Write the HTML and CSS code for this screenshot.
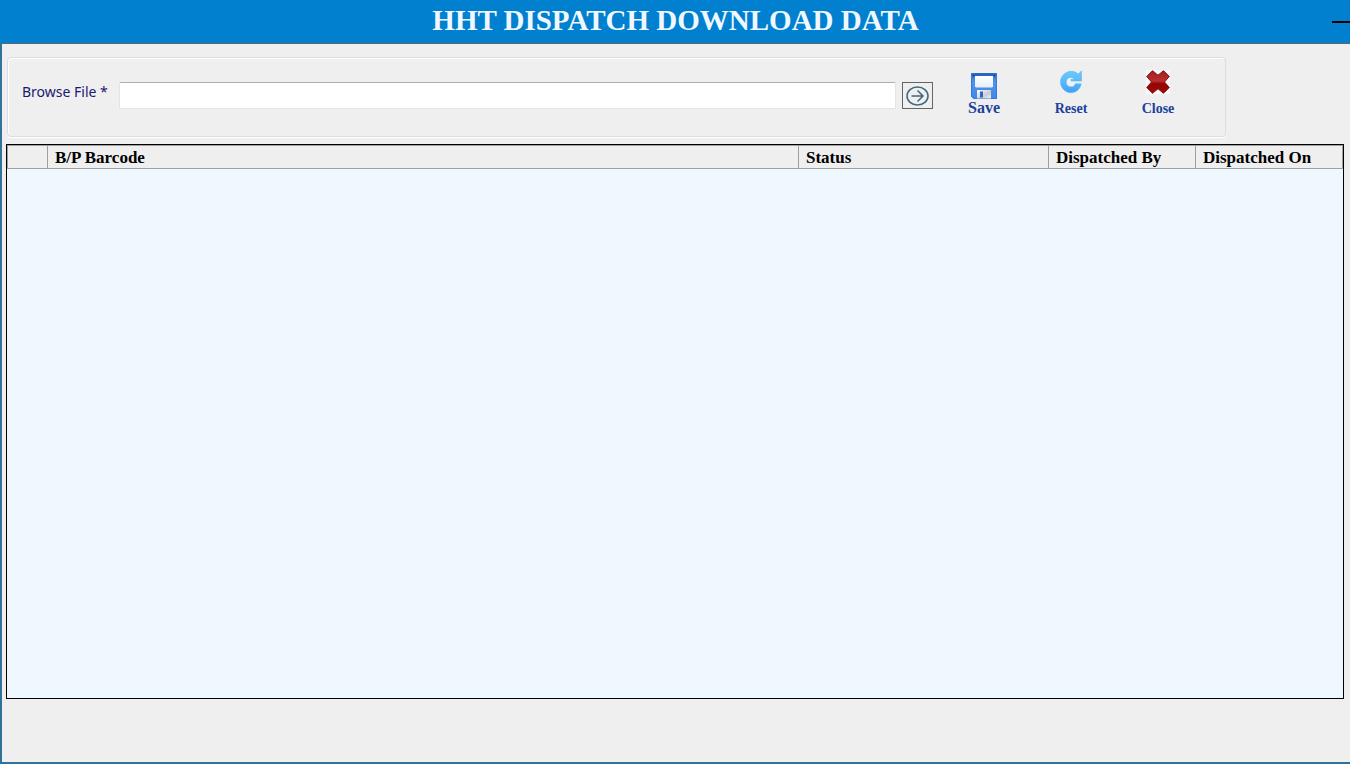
FILE: index.html
```html
<!DOCTYPE html>
<html lang="en">
<head>
<meta charset="utf-8">
<title>HHT Dispatch Download Data</title>
<link rel="stylesheet" href="styles.css">
</head>
<body>
<div class="window">
  <header class="titlebar">
    <span></span>
    <h1 class="title">HHT DISPATCH DOWNLOAD DATA</h1>
    <button class="minimize" type="button" aria-label="Minimize"></button>
  </header>
  <main class="content">
    <form class="toolbar">
      <label class="field-label" for="file">Browse File *</label>
      <input class="file-input" id="file" type="text">
      <button class="browse" type="button" aria-label="Browse">
        <svg width="23" height="20" viewBox="0 0 23 20" fill="none" stroke="#3f6780">
          <ellipse cx="11.5" cy="10" rx="10.5" ry="9" stroke-width="1.5"/>
          <path d="M5.5 10H17M11.5 4.5L17 10l-5.500 5.500" stroke-width="1.500"/>
        </svg>
      </button>
      <div class="actions">
        <button class="action action-save" type="button">
          <svg width="26" height="26" viewBox="0 0 26 26">
            <defs>
              <linearGradient id="disk" x1="0" y1="0" x2="0" y2="1"><stop offset="0" stop-color="#3674cf"/><stop offset=".35" stop-color="#4d92ee"/><stop offset="1" stop-color="#4288e6"/></linearGradient>
              <linearGradient id="paper" x1="0" y1="0" x2="0" y2="1"><stop offset="0" stop-color="#fff"/><stop offset="1" stop-color="#e4eff3"/></linearGradient>
              <linearGradient id="metal" x1="0" y1="0" x2="1" y2="1"><stop offset="0" stop-color="#fff"/><stop offset=".6" stop-color="#c9ccd2"/><stop offset="1" stop-color="#f3f3f3"/></linearGradient>
            </defs>
            <path d="M0 0h26v26H2.500L0 23.500z" fill="url(#disk)"/>
            <path d="M.5 0v23l2.500 2.500H25.500V0" fill="none" stroke="#3978d8"/>
            <path d="M4 0h18v3H4z" fill="#2b65bc"/>
            <path d="M1.500 1.500h2v2h-2zM22.500 1.500h2v2h-2z" fill="#193f87"/>
            <path d="M4 3h18v10.500l-1 1H5l-1-1z" fill="url(#paper)"/>
            <path d="M6 17h14v8.500H6z" fill="url(#metal)"/>
            <path d="M9 18.500h3v6H9z" fill="#2867cc"/>
          </svg>
          <span>Save</span>
        </button>
        <button class="action action-reset" type="button">
          <svg width="24" height="24" viewBox="0 0 24 24">
            <defs><linearGradient id="arrow" x1="0" y1="0" x2="0" y2="1"><stop offset="0" stop-color="#6cc9ff"/><stop offset=".5" stop-color="#55baff"/><stop offset="1" stop-color="#3da0f3"/></linearGradient></defs>
            <path d="M22.500 .8V11H12V9.200h3.300C14.500 8 13.300 7.400 12 7.400a4.700 4.700 0 1 0 4.400 6.400h5.800C21.300 19 17.300 22.700 12 22.700A10.700 10.700 0 1 1 19.300 4z" fill="url(#arrow)" stroke="#62b8ee" stroke-width=".6"/>
          </svg>
          <span>Reset</span>
        </button>
        <button class="action" type="button">
          <svg width="24" height="24" viewBox="0 0 24 24">
            <defs><linearGradient id="cross" x1="0" y1="0" x2="0" y2="1"><stop offset="0" stop-color="#a51c1c"/><stop offset=".45" stop-color="#b93030"/><stop offset=".58" stop-color="#940303"/><stop offset="1" stop-color="#a80808"/></linearGradient></defs>
            <path d="M0 0h24v24H0z" fill="#fafafa"/>
            <path d="M6.500 .7 12 5.200 17.500 .7 23.300 6.500 18.500 12l4.800 5.500-5.800 5.800L12 18.800 6.500 23.300 .7 17.500 5.500 12 .7 6.500z" fill="url(#cross)" stroke="#7f1414" stroke-linejoin="round"/>
          </svg>
          <span>Close</span>
        </button>
      </div>
    </form>
    <section class="grid">
      <table class="records">
        <thead>
          <tr>
            <th class="col-marker"></th>
            <th>B/P Barcode</th>
            <th class="col-status">Status</th>
            <th class="col-user">Dispatched By</th>
            <th class="col-user">Dispatched On</th>
          </tr>
        </thead>
        <tbody></tbody>
      </table>
    </section>
  </main>
</div>
</body>
</html>
```
FILE: styles.css
```css
* { box-sizing: border-box; }
body { margin: 0; }
.window {
  min-height: 100vh;
  display: flex;
  flex-direction: column;
  background: #0080cf;
  padding: 0 0 1px 1px;
}
.titlebar {
  display: grid;
  grid-template-columns: 1fr auto 1fr;
  height: 43px;
}
.title {
  margin: 0;
  color: #f0f8ff;
  font: bold 29px/40px "Liberation Serif", serif;
  white-space: nowrap;
}
.minimize {
  justify-self: end;
  width: 18px;
  height: 23px;
  padding: 0;
  background: none;
  border: 0;
  border-bottom: 2px solid #000;
}
.content {
  flex: 1;
  display: flex;
  flex-direction: column;
  gap: 7px;
  padding: 13px 6px 63px 4px;
  background: #efefef;
  border: solid #646464;
  border-width: 1px 0 1px 1px;
}
.toolbar {
  display: flex;
  align-items: flex-start;
  height: 80px;
  margin: 0 118px 0 1px;
  padding: 11px 50px 0 14px;
  border: 1px solid #d5dfe5;
  border-radius: 4px;
  box-shadow: inset 1px 1px #fff, 0 1px #fff;
}
.field-label {
  width: 97px;
  margin-top: 13px;
  color: #191970;
  font: 14px/20px "Noto Sans", sans-serif;
  white-space: nowrap;
}
.file-input {
  flex: 1;
  min-width: 0;
  height: 27px;
  margin-top: 13px;
  padding: 0 4px;
  background: #fff;
  border: 1px solid #e2e3ea;
  border-top-color: #abadb3;
  border-radius: 2px;
  font: 14px "Noto Sans", sans-serif;
}
.browse {
  display: grid;
  place-items: center;
  width: 31px;
  height: 27px;
  margin: 13px 34px 0 6px;
  padding: 0;
  background: #efefef;
  border: 1px solid #646464;
}
.actions {
  display: flex;
  gap: 53px;
}
.action {
  display: flex;
  flex-direction: column;
  align-items: center;
  gap: 6px;
  width: 34px;
  padding: 1px 0 0;
  background: none;
  border: 0;
  color: #1c429b;
  font: bold 14px/18px "Liberation Serif", serif;
}
.action-save {
  gap: 0;
  padding-top: 4px;
  font-size: 16px;
}
.grid {
  flex: 1;
  background: #f0f8ff;
  border: 1px solid #000;
}
.records {
  width: 100%;
  table-layout: fixed;
  border-collapse: separate;
  border-spacing: 0;
  background: #efefef;
  border: solid #a0a0a0;
  border-width: 1px 1px 1px 0;
}
.records th {
  height: 22px;
  padding: 2px 0 0 7px;
  border-left: 1px solid #a0a0a0;
  font: bold 17px/20px "Liberation Serif", serif;
  text-align: left;
}
.records .col-marker { width: 40px; }
.col-status { width: 250px; }
.col-user { width: 147px; }
```
